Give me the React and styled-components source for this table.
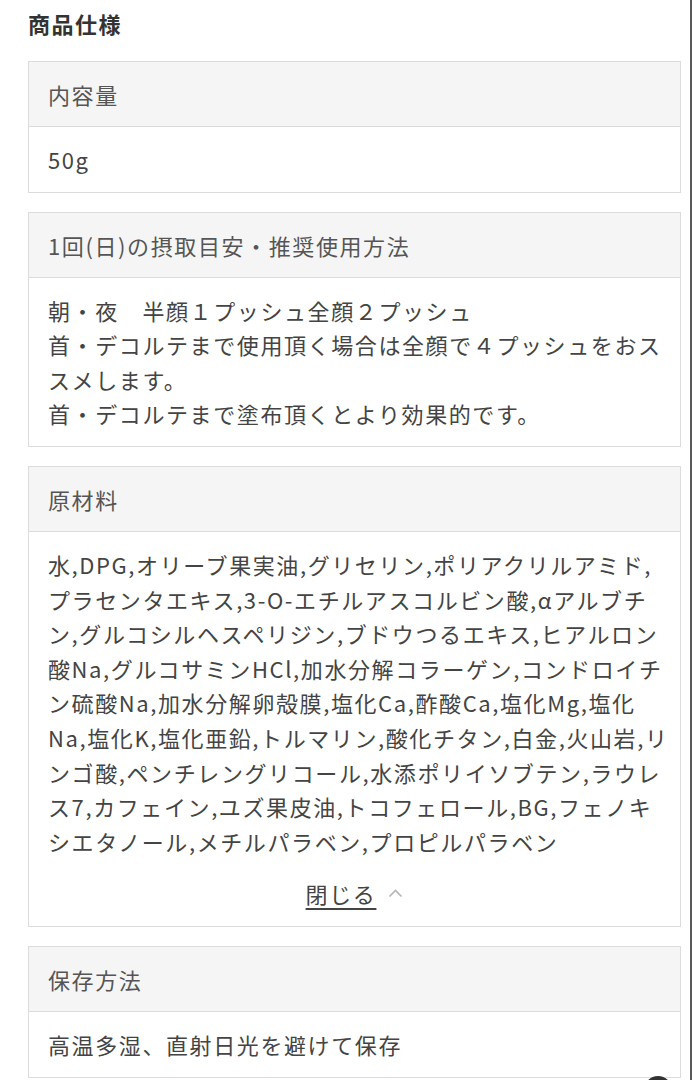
import React from "react";
import styled, { createGlobalStyle } from "styled-components";

const GlobalStyle = createGlobalStyle`
  html, body {
    margin: 0;
    padding: 0;
    background: #fff;
  }
  body {
    font-family: "Noto Sans CJK JP", "Noto Sans", sans-serif;
    color: #444;
  }
`;

const specs = [
  { label: "内容量", lines: ["50g"] },
  {
    label: "1回(日)の摂取目安・推奨使用方法",
    lines: [
      "朝・夜　半顔１プッシュ全顔２プッシュ",
      "首・デコルテまで使用頂く場合は全顔で４プッシュをおス",
      "スメします。",
      "首・デコルテまで塗布頂くとより効果的です。",
    ],
  },
  {
    label: "原材料",
    lines: [
      "水,DPG,オリーブ果実油,グリセリン,ポリアクリルアミド,",
      "プラセンタエキス,3-O-エチルアスコルビン酸,αアルブチ",
      "ン,グルコシルヘスペリジン,ブドウつるエキス,ヒアルロン",
      "酸Na,グルコサミンHCl,加水分解コラーゲン,コンドロイチ",
      "ン硫酸Na,加水分解卵殻膜,塩化Ca,酢酸Ca,塩化Mg,塩化",
      "Na,塩化K,塩化亜鉛,トルマリン,酸化チタン,白金,火山岩,リ",
      "ンゴ酸,ペンチレングリコール,水添ポリイソブテン,ラウレ",
      "ス7,カフェイン,ユズ果皮油,トコフェロール,BG,フェノキ",
      "シエタノール,メチルパラベン,プロピルパラベン",
    ],
    collapsible: true,
  },
  { label: "保存方法", lines: ["高温多湿、直射日光を避けて保存"] },
];

export default function App() {
  return (
    <>
      <GlobalStyle />
      <Page>
        <Title>商品仕様</Title>
        <CardList>
          {specs.map((spec) => (
            <Card key={spec.label}>
              <CardHeader>{spec.label}</CardHeader>
              <CardBody>
                {spec.lines.map((line, i) => (
                  <Line key={i}>{line}</Line>
                ))}
                {spec.collapsible && (
                  <CloseRow>
                    <CloseLink>閉じる</CloseLink>
                    <svg width="15" height="9" viewBox="0 0 15 9">
                      <path
                        d="M1.5 7.5 L7.5 1.5 L13.5 7.5"
                        fill="none"
                        stroke="#b5b5b5"
                        strokeWidth="1.6"
                      />
                    </svg>
                  </CloseRow>
                )}
              </CardBody>
            </Card>
          ))}
        </CardList>
        <FloatButton />
      </Page>
    </>
  );
}

const Page = styled.div`
  position: relative;
  width: 692px;
  height: 1080px;
  overflow: hidden;
  box-sizing: border-box;
  padding: 6px 9px 0 28px;
  border-right: 2px solid #5a5a5a;
`;

const Title = styled.h2`
  margin: 0 0 21px;
  font-size: 22px;
  line-height: 34px;
  letter-spacing: 1.5px;
  font-weight: 700;
  color: #333;
`;

const CardList = styled.div`
  display: flex;
  flex-direction: column;
  gap: 19px;
`;

const Card = styled.section`
  border: 1px solid #dcdcdc;
  background: #fff;
`;

const CardHeader = styled.div`
  background: #f5f5f5;
  border-bottom: 1px solid #dcdcdc;
  padding: 15px 19px;
  font-size: 22px;
  line-height: 34px;
  letter-spacing: 1.6px;
  color: #555;
`;

const CardBody = styled.div`
  padding: 15px 19px;
  font-size: 22px;
  line-height: 34.6px;
  letter-spacing: 1.6px;
  color: #444;
`;

const Line = styled.div`
  white-space: nowrap;
`;

const CloseRow = styled.div`
  display: flex;
  justify-content: center;
  align-items: center;
  gap: 12px;
  margin-top: 18px;
`;

const CloseLink = styled.span`
  text-decoration: underline;
  text-underline-offset: 5px;
  text-decoration-thickness: 1.5px;
  color: #444;
`;

const FloatButton = styled.div`
  position: absolute;
  right: 18px;
  bottom: -24px;
  width: 28px;
  height: 28px;
  border-radius: 50%;
  background: #333;
`;
